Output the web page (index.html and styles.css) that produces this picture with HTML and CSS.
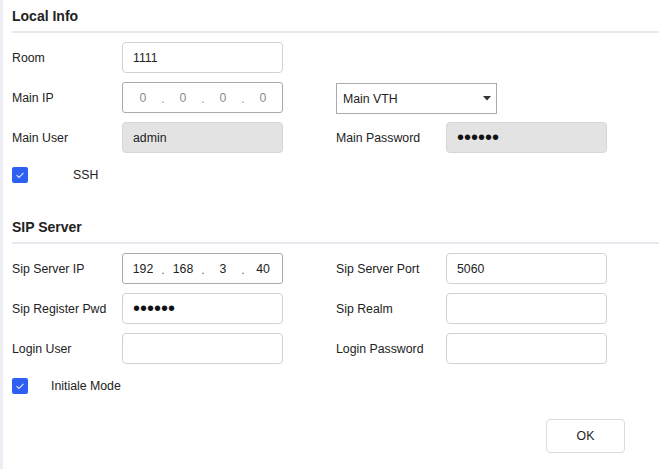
FILE: index.html
```html
<!DOCTYPE html>
<html lang="en">
<head>
<meta charset="utf-8">
<title>Local Info</title>
<link rel="stylesheet" href="styles.css">
</head>
<body>
<div class="page">
  <section class="section">
    <h2 class="section-title">Local Info</h2>
    <div class="grid">
      <div class="field">
        <span class="label">Room</span>
        <div class="input">1111</div>
      </div>
      <div class="field"></div>

      <div class="field">
        <span class="label">Main IP</span>
        <div class="input ip muted">
          <span class="seg">0</span><span class="dot">.</span><span class="seg">0</span><span class="dot">.</span><span class="seg">0</span><span class="dot">.</span><span class="seg">0</span>
        </div>
      </div>
      <div class="field">
        <div class="select">
          <span>Main VTH</span>
          <svg class="caret" width="8" height="5" viewBox="0 0 8 5"><path d="M0 0H8L4 4.5Z" fill="#333"/></svg>
        </div>
      </div>

      <div class="field">
        <span class="label">Main User</span>
        <div class="input disabled">admin</div>
      </div>
      <div class="field">
        <span class="label">Main Password</span>
        <div class="input disabled"><span class="pwd">••••••</span></div>
      </div>
    </div>
    <div class="check-row">
      <span class="checkbox"><svg width="16" height="16" viewBox="0 0 16 16"><path d="M4.5 8.2L7 10.5L11.5 5.8" fill="none" stroke="#dfe6ff" stroke-width="1.1"/></svg></span>
      <span class="check-label wide">SSH</span>
    </div>
  </section>

  <section class="section second">
    <h2 class="section-title">SIP Server</h2>
    <div class="grid">
      <div class="field">
        <span class="label">Sip Server IP</span>
        <div class="input ip">
          <span class="seg">192</span><span class="dot">.</span><span class="seg">168</span><span class="dot">.</span><span class="seg">3</span><span class="dot">.</span><span class="seg">40</span>
        </div>
      </div>
      <div class="field">
        <span class="label">Sip Server Port</span>
        <div class="input">5060</div>
      </div>

      <div class="field">
        <span class="label">Sip Register Pwd</span>
        <div class="input"><span class="pwd">••••••</span></div>
      </div>
      <div class="field">
        <span class="label">Sip Realm</span>
        <div class="input"></div>
      </div>

      <div class="field">
        <span class="label">Login User</span>
        <div class="input"></div>
      </div>
      <div class="field">
        <span class="label">Login Password</span>
        <div class="input"></div>
      </div>
    </div>
    <div class="check-row">
      <span class="checkbox"><svg width="16" height="16" viewBox="0 0 16 16"><path d="M4.5 8.2L7 10.5L11.5 5.8" fill="none" stroke="#dfe6ff" stroke-width="1.1"/></svg></span>
      <span class="check-label">Initiale Mode</span>
    </div>
  </section>

  <div class="footer">
    <button class="btn" type="button">OK</button>
  </div>
</div>
</body>
</html>
```

FILE: styles.css
```css
* { box-sizing: border-box; }

html, body {
  margin: 0;
  padding: 0;
  background: #ffffff;
}

body {
  font-family: "Liberation Sans", Arial, sans-serif;
  font-size: 12.3px;
  color: #222222;
}

.page {
  min-height: 469px;
  border-left: 3px solid #eceef4;
  padding-left: 9px;
}

.section-title {
  margin: 0;
  height: 33px;
  padding-top: 7px;
  line-height: 19px;
  font-size: 14px;
  font-weight: bold;
  color: #222222;
  border-bottom: 2px solid #e9eaef;
}

.second {
  margin-top: 23px;
}

.grid {
  display: grid;
  grid-template-columns: 324px 271px;
  grid-auto-rows: 31px;
  row-gap: 9px;
  padding-top: 9px;
}

.field {
  display: flex;
  align-items: center;
}

.label {
  width: 110px;
  flex: none;
  color: #222222;
}

.input {
  width: 161px;
  height: 31px;
  border: 1px solid #d2d2d2;
  border-radius: 4px;
  padding-left: 10px;
  display: flex;
  align-items: center;
  color: #222222;
  background: #ffffff;
}

.input.disabled {
  background: #e3e3e3;
  border-color: #d6d6d6;
}

.input.ip {
  padding-left: 0;
  border-color: #a9a9a9;
  border-radius: 3px;
}

.seg {
  width: 40px;
  text-align: center;
  flex: none;
}

.dot {
  width: 0;
  flex: none;
  display: flex;
  justify-content: center;
  color: #666666;
  font-size: 12px;
  position: relative;
  top: 1px;
}

.ip.muted .seg {
  color: #8c8c8c;
}

.ip.muted .dot {
  color: #9a9a9a;
}

.pwd {
  font-size: 20px;
  line-height: 1;
  letter-spacing: 0;
  color: #111111;
  position: relative;
  top: -1px;
}

.select {
  width: 161px;
  height: 31px;
  border: 1px solid #aaaaaa;
  display: flex;
  align-items: center;
  justify-content: space-between;
  padding-left: 6px;
  padding-right: 5px;
  margin-top: 1px;
  align-self: flex-start;
}

.caret {
  display: block;
}

.check-row {
  height: 26px;
  margin-top: 9px;
  display: flex;
  align-items: center;
}

.checkbox {
  width: 16px;
  height: 16px;
  border-radius: 2px;
  background: #2d5ff2;
  display: flex;
}

.check-label {
  margin-left: 23px;
  color: #222222;
}

.check-label.wide {
  margin-left: 45px;
}

.footer {
  display: flex;
  justify-content: flex-end;
  padding-right: 34px;
  margin-top: 20px;
}

.btn {
  width: 79px;
  height: 34px;
  border: 1px solid #dcdcdc;
  border-radius: 4px;
  background: #ffffff;
  font-family: "Liberation Sans", Arial, sans-serif;
  font-size: 12.3px;
  color: #222222;
  padding: 0;
}
```
